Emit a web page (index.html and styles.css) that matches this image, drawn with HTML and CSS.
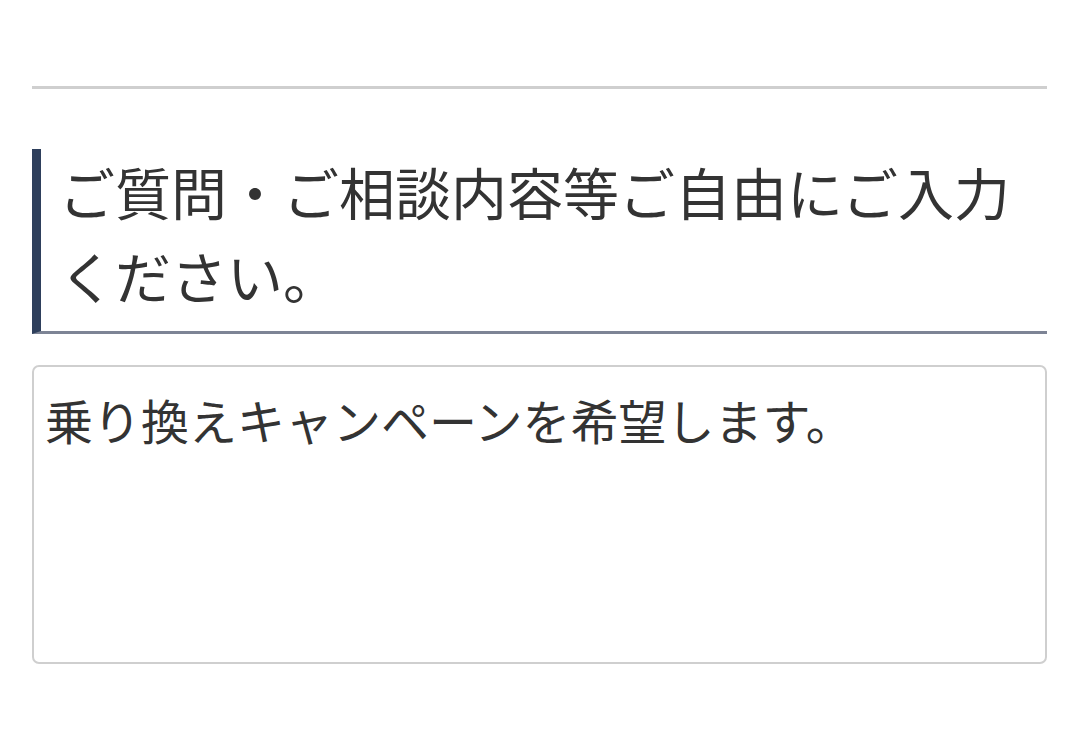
FILE: index.html
```html
<!DOCTYPE html>
<html lang="ja">
<head>
<meta charset="utf-8">
<link rel="stylesheet" href="styles.css">
</head>
<body>
<div class="page">
  <hr class="rule">
  <h2 class="heading">ご質問・ご相談内容等ご自由にご入力ください。</h2>
  <textarea class="message">乗り換えキャンペーンを希望します。</textarea>
</div>
</body>
</html>
```
FILE: styles.css
```css
html, body {
  margin: 0;
  padding: 0;
  background: #fff;
}
.page {
  padding: 86px 30px 0 32px;
  font-family: "Noto Sans CJK JP", "Noto Sans", sans-serif;
  color: #333;
}
.rule {
  margin: 0;
  border: 0;
  height: 3px;
  background: #cfcfcf;
}
.heading {
  margin: 60px 0 0 0;
  padding: 0 10px 14px 18px;
  border-left: 9px solid #2e3f5c;
  border-bottom: 3px solid #7d8495;
  font-size: 56px;
  font-weight: 400;
  line-height: 84px;
  color: #333;
}
.message {
  display: block;
  box-sizing: border-box;
  width: 100%;
  height: 299px;
  margin: 31px 0 0 0;
  padding: 19px 11px 9px;
  border: 2px solid #cfcfcf;
  border-radius: 7px;
  font-family: "Noto Sans CJK JP", "Noto Sans", sans-serif;
  font-size: 48px;
  line-height: 1.4;
  color: #333;
  resize: none;
  background: #fff;
}
```
